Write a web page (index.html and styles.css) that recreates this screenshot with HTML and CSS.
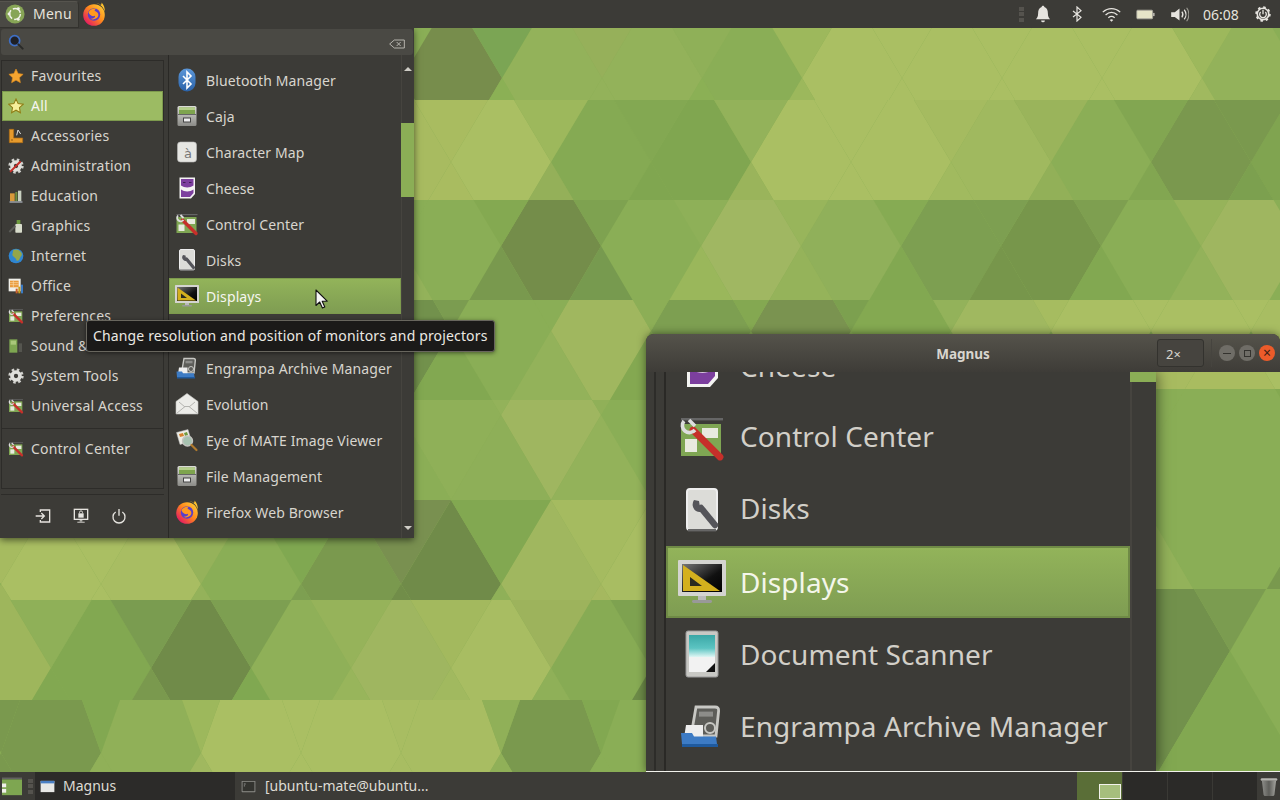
FILE: index.html
```html
<!DOCTYPE html>
<html lang="en">
<head>
<meta charset="utf-8">
<title>Ubuntu MATE desktop</title>
<link rel="stylesheet" href="styles.css">
</head>
<body>
<svg class="sprite" aria-hidden="true">
  <defs>
    <linearGradient id="gBt" x1="0" y1="0" x2="0" y2="1"><stop offset="0" stop-color="#5c97d8"/><stop offset="1" stop-color="#2a62a8"/></linearGradient>
    <linearGradient id="gGrey" x1="0" y1="0" x2="0" y2="1"><stop offset="0" stop-color="#dcdcd8"/><stop offset="1" stop-color="#8b8b87"/></linearGradient>
    <linearGradient id="gScreen" x1="0" y1="0" x2="1" y2="1"><stop offset="0" stop-color="#777"/><stop offset=".6" stop-color="#111"/><stop offset="1" stop-color="#000"/></linearGradient>
    <linearGradient id="gTeal" x1="0" y1="0" x2="0" y2="1"><stop offset="0" stop-color="#3aa7a6"/><stop offset=".6" stop-color="#5cc4c2"/><stop offset="1" stop-color="#dff6f4"/></linearGradient>
    <linearGradient id="gFx" x1="1" y1="0" x2="0" y2="1"><stop offset="0" stop-color="#ffd93a"/><stop offset=".45" stop-color="#ff8a1c"/><stop offset=".85" stop-color="#e6205e"/><stop offset="1" stop-color="#c4127a"/></linearGradient>
    <linearGradient id="gTrash" x1="0" y1="0" x2="1" y2="0"><stop offset="0" stop-color="#8d8d89"/><stop offset=".5" stop-color="#5e5e5a"/><stop offset="1" stop-color="#a5a5a0"/></linearGradient>

    <symbol id="i-bt" viewBox="0 0 24 24"><rect x="3.500" y=".5" width="17" height="23" rx="8.500" fill="url(#gBt)"/><path d="M8 8l8 8-4 4V4l4 4-8 8" fill="none" stroke="#fff" stroke-width="1.600"/></symbol>
    <symbol id="i-drawer" viewBox="0 0 24 24"><rect x="2.500" y="2" width="19" height="20" rx="1.500" fill="url(#gGrey)"/><rect x="4" y="3.500" width="16" height="6.500" fill="#7ea44e"/><rect x="4" y="3.500" width="16" height="2.500" fill="#b5cf8a"/><rect x="3" y="10" width="18" height="1" fill="#666"/><rect x="8.500" y="14" width="7" height="4" fill="#eee" stroke="#444"/></symbol>
    <symbol id="i-char" viewBox="0 0 24 24"><rect x="2.500" y="2" width="19" height="20" rx="3" fill="#e6e6e2" stroke="#bbb" stroke-width=".6"/><text class="glyph" x="13" y="18" text-anchor="middle">à</text></symbol>
    <symbol id="i-cheese" viewBox="0 0 24 24"><path d="M4.500 1.500H20V18l-4 4.500H4.500z" fill="#f4f4f2"/><path d="M6 3h12.500v6.500c-3.500 2.500-9 2.500-12.500 0z" fill="#7c3f9e"/><path d="M6 13.500c3.500 2.500 9 2.500 12.500 0v3.500l-3.500 4H6z" fill="#7c3f9e"/><path d="M8 6.500h2.500M14 6.500h2.500" stroke="#3e1f55"/></symbol>
    <symbol id="i-cc" viewBox="0 0 24 24"><rect x="1.500" y="2" width="21" height="1.200" fill="#666"/><rect x="1.500" y="5" width="20" height="16" fill="#7fa653"/><rect x="12" y="7" width="8" height="5" fill="#e8eadf"/><rect x="3.500" y="12.500" width="6" height="6.500" fill="#e8eadf"/><path d="M7.500 8l13.500 13.500" stroke="#c62f2a" stroke-width="3.400" stroke-linecap="round"/><path d="M3 3.500a3.500 3.500 0 0 0 5.500 4.500M5.500 3l3 3" fill="none" stroke="#ddd" stroke-width="1.800"/></symbol>
    <symbol id="i-disks" viewBox="0 0 24 24"><rect x="4.500" y="1.500" width="15" height="20.500" rx="1.500" fill="#dcdcd8" stroke="#eee"/><rect x="5" y="21.500" width="14" height="1.200" fill="#666"/><path d="M11.500 11l7 8.500" stroke="#55555a" stroke-width="3.200" stroke-linecap="round"/><path d="M8 7a4 4 0 0 0 1 5.500 4 4 0 0 0 5-1l-3-1-.5-3z" fill="#55555a"/></symbol>
    <symbol id="i-displays" viewBox="0 0 24 24"><rect x="0" y="1" width="24" height="18" rx=".5" fill="#d4d4d0"/><rect x="2" y="3" width="20" height="14" fill="url(#gScreen)"/><path d="M2.500 3.500V16.500H21z" fill="#d4b01e"/><path d="M6 9.500V14h6z" fill="#2a2a20"/><rect x="10" y="19" width="4" height="2" fill="#bbb"/><rect x="7" y="21" width="10" height="1.500" rx=".7" fill="#999"/></symbol>
    <symbol id="i-scanner" viewBox="0 0 24 24"><rect x="4" y=".5" width="16" height="23" rx="1" fill="#c8c8c4" stroke="#999" stroke-width=".5"/><rect x="5.500" y="2.500" width="13" height="11" fill="url(#gTeal)"/><rect x="5.500" y="13.500" width="13" height="7.500" fill="#f2f2f2"/><path d="M18.500 16.500V21H14z" fill="#111"/></symbol>
    <symbol id="i-engrampa" viewBox="0 0 24 24"><path d="M9 2.500h9.500q2 0 1.800 2L19 17H6.500z" fill="#5d5d59" stroke="#c8c8c4" stroke-width="1.400"/><rect x="10.500" y="4.800" width="7" height="2.500" fill="#8d8d8a"/><circle cx="16" cy="13" r="2.500" fill="none" stroke="#c8c8c4"/><path d="M4 11.500h8.500V18H3z" fill="#eee"/><path d="M1.500 15.500H7l1 1.800h11l.5 3.700H2z" fill="#3d7bc4"/><rect x="2" y="21" width="18" height="1.500" fill="#1f5a9e"/></symbol>
    <symbol id="i-evo" viewBox="0 0 24 24"><path d="M1 9.500L12 1.500l11 8V22H1z" fill="#ecece8" stroke="#c4c4c0" stroke-width=".6"/><path d="M1.500 21.500l8.500-7h4l8.500 7M4 10l6 5M20 10l-6 5" stroke="#b4b4b0" fill="none"/></symbol>
    <symbol id="i-eom" viewBox="0 0 24 24"><path d="M1.500 4.500L13 1.500l3.500 12L5 16.500z" fill="#ecece4" stroke="#bbb" stroke-width=".5"/><path d="M4 6l4-1 1 3-4 1z" fill="#d6812c"/><path d="M9 5l3-1 1 3-3 1z" fill="#6f9a3d"/><circle cx="12.500" cy="13" r="5" fill="#a7c2b0" stroke="#c4c4c0" stroke-width="1.400"/><path d="M16.500 17l5 5" stroke="#b07a2d" stroke-width="2.200" stroke-linecap="round"/></symbol>
    <symbol id="i-fx" viewBox="0 0 24 24"><circle cx="12" cy="13" r="10.800" fill="url(#gFx)"/><circle cx="12" cy="12.500" r="6.200" fill="#5a3ec8"/><path d="M6.500 10.500c1-3 4.500-4.500 8-4-2.300 .7-2.300 2.200-1 2.800 2.500 1 3.500 3 2.500 5.300-1.200 2.500-5 3.600-7.500 2.200 3.200 .2 5-1.300 4.500-3-1.800 1-4.800 .3-6.500-3.300z" fill="#ff9a1f"/><path d="M14.500 1c3.500 1 7 4 8.200 8.500.5-3.500-1-7-3.200-9 .2 1.300 0 2-.7 2.500-1-1-2.600-1.700-4.300-2z" fill="#ffc22e"/></symbol>

    <symbol id="i-star" viewBox="0 0 24 24"><path d="M12 1.500l3.200 6.900 7.500 1-5.500 5.200 1.400 7.400L12 18.300 5.400 22l1.400-7.400L1.300 9.400l7.500-1z" fill="#f5a430" stroke="#d5881f"/></symbol>
    <symbol id="i-star2" viewBox="0 0 24 24"><path d="M12 1.500l3.200 6.900 7.500 1-5.500 5.200 1.400 7.400L12 18.300 5.400 22l1.400-7.400L1.300 9.400l7.500-1z" fill="#f6ef9a" stroke="#8f7c14" stroke-width="1.600"/></symbol>
    <symbol id="i-acc" viewBox="0 0 24 24"><path d="M2 2h6.500v13H22v7H2z" fill="#e69a2c" stroke="#b06e14"/><path d="M15 3l-2 8M15 3l4 6" stroke="#ddd" stroke-width="1.500" fill="none"/><rect x="5" y="17" width="2" height="2" fill="#8a5410"/></symbol>
    <symbol id="i-gear" viewBox="0 0 24 24"><circle cx="12" cy="12" r="9.500" fill="none" stroke="#d2d2ce" stroke-width="4" stroke-dasharray="3.700 3.760"/><circle cx="12" cy="12" r="6" fill="none" stroke="#e0e0dc" stroke-width="5.500"/></symbol>
    <symbol id="i-admin" viewBox="0 0 24 24"><use href="#i-gear"/><path d="M4 20L18 6" stroke="#c62f2a" stroke-width="3" stroke-linecap="round"/></symbol>
    <symbol id="i-edu" viewBox="0 0 24 24"><rect x="3" y="8" width="7" height="12" fill="#d89a3a"/><rect x="11" y="6" width="3" height="14" fill="#6d8f3d"/><rect x="15" y="4" width="5" height="16" fill="#c8d0c0"/><rect x="2" y="20" width="20" height="2" rx="1" fill="#9aa0a8"/></symbol>
    <symbol id="i-gfx" viewBox="0 0 24 24"><rect x="11" y="9" width="10" height="13" rx="1" fill="#d8dccb"/><rect x="13" y="3" width="5.500" height="6" fill="#6d9a3d"/><path d="M2 21L11 12" stroke="#5c5c58" stroke-width="2.800"/></symbol>
    <symbol id="i-net" viewBox="0 0 24 24"><circle cx="12" cy="12" r="11" fill="#2f86d2"/><path d="M8 3c5-2 10 0 12.500 5 1 3-1 4-2.500 7-1 2.500-2.500 5-5 4-.7-3-2-4-4-5.500-2.500-1.500-3-3.500-2-5.500 .5-2 .5-3.500 1-5z" fill="#94a64a"/></symbol>
    <symbol id="i-office" viewBox="0 0 24 24"><rect x="1" y="1" width="18" height="19" fill="#f0f0ea"/><rect x="3" y="4" width="13" height="10" fill="#ea9a3a"/><path d="M3 7h13M3 10h13M8 4v10" stroke="#f8d9a8"/><rect x="11.500" y="16" width="3" height="7" fill="#c9602a"/><rect x="15.500" y="13" width="3" height="10" fill="#c9a020"/><rect x="19.500" y="10" width="3" height="13" fill="#3a7ac4"/></symbol>
    <symbol id="i-sound" viewBox="0 0 24 24"><rect x="2" y="2" width="12" height="20" fill="#7ea651"/><rect x="4" y="4" width="8" height="6" fill="#a9c77a"/><path d="M16 8h5v13h-5z" fill="#55554f"/></symbol>

    <symbol id="i-logo" viewBox="0 0 24 24"><circle cx="12" cy="12" r="11.500" fill="#87a556"/><circle cx="12" cy="12" r="6.500" fill="none" stroke="#f2f2ea" stroke-width="1.800" stroke-dasharray="11 2.600"/><circle cx="4.800" cy="12" r="1.700" fill="#f2f2ea"/><circle cx="16" cy="5.500" r="1.700" fill="#f2f2ea"/><circle cx="16" cy="18.500" r="1.700" fill="#f2f2ea"/></symbol>
    <symbol id="i-bell" viewBox="0 0 24 24"><path d="M12 1c-1.200 0-1.800 .8-1.800 1.800C6.500 4 5.500 7.500 5.500 11c0 4.500-1.300 6.500-3 8h19c-1.700-1.500-3-3.500-3-8 0-3.500-1-7-4.700-8.200C13.800 1.800 13.200 1 12 1zM9.500 20.500a2.500 2.500 0 0 0 5 0z" fill="#e6e4df"/></symbol>
    <symbol id="i-btg" viewBox="0 0 24 24"><path d="M6 7.500l12 9.500-6 5.500V1.500l6 5.500-12 9.500" fill="none" stroke="#e6e4df" stroke-width="1.800"/></symbol>
    <symbol id="i-wifi" viewBox="0 0 24 24"><path d="M1 9c6.500-6 15.500-6 22 0M4.500 12.500c4.500-4 10.500-4 15 0M8 16c2.500-2 5.500-2 8 0" fill="none" stroke="#e6e4df" stroke-width="1.700"/><path d="M9.800 18.800c1.300-1 3-1 4.400 0L12 21z" fill="#e6e4df"/></symbol>
    <symbol id="i-batt" viewBox="0 0 24 24"><rect x="1" y="6.500" width="20" height="11" rx="1.200" fill="#e6e4c8" stroke="#a8a69e"/><rect x="21.500" y="10" width="2" height="4" fill="#b8b6ae"/></symbol>
    <symbol id="i-vol" viewBox="0 0 24 24"><path d="M1.500 9H6l6-4.500v15L6 15H1.500z" fill="#e6e4df"/><path d="M15 8.500c1.500 2 1.500 5 0 7M18 6c2.800 3.500 2.800 8.500 0 12" fill="none" stroke="#e6e4df" stroke-width="1.600"/><path d="M21 3.500c3.800 5 3.800 12 0 17" fill="none" stroke="#9a9890" stroke-width="1.400"/></symbol>
    <symbol id="i-sys" viewBox="0 0 24 24"><circle cx="12" cy="12" r="8.600" fill="none" stroke="#e6e4df" stroke-width="2.400"/><circle cx="12" cy="12" r="10.300" fill="none" stroke="#e6e4df" stroke-width="2.600" stroke-dasharray="3.800 4.290"/><path d="M8.500 9a5 5 0 1 0 7 0M12 5.500v7" fill="none" stroke="#e6e4df" stroke-width="2"/></symbol>

    <symbol id="i-logout" viewBox="0 0 24 24"><path d="M8 6V3h14v18H8v-3" fill="none" stroke="#e6e4df" stroke-width="2"/><path d="M1 12h12M9.500 7.500L14 12l-4.500 4.500" fill="none" stroke="#e6e4df" stroke-width="2"/></symbol>
    <symbol id="i-lock" viewBox="0 0 24 24"><rect x="1" y="1" width="22" height="17" fill="#e6e4df"/><rect x="3" y="3" width="18" height="13" fill="#3c3b37"/><rect x="8" y="8" width="8" height="6.500" fill="#e6e4df"/><path d="M9.800 8V6.500a2.200 2.200 0 0 1 4.400 0V8" fill="none" stroke="#e6e4df" stroke-width="1.400"/><rect x="10" y="18" width="4" height="2.500" fill="#b5b3ae"/><rect x="6.500" y="20.500" width="11" height="1.800" fill="#b5b3ae"/></symbol>
    <symbol id="i-power" viewBox="0 0 24 24"><path d="M7 6a9 9 0 1 0 10 0" fill="none" stroke="#e6e4df" stroke-width="2"/><path d="M12 1.500v10" stroke="#e6e4df" stroke-width="2"/></symbol>
    <symbol id="i-search" viewBox="0 0 24 24"><circle cx="10" cy="10" r="7.500" fill="#1f2026" stroke="#3f6fc4" stroke-width="2.600"/><path d="M15.500 15.500l6.500 6.500" stroke="#2a2a28" stroke-width="3" stroke-linecap="round"/></symbol>
    <symbol id="i-clear" viewBox="0 0 24 24"><path d="M8 6h15v12H8l-7-6z" fill="none" stroke="#bdbbb5" stroke-width="1.400"/><path d="M11.500 9l6 6M17.500 9l-6 6" stroke="#bdbbb5" stroke-width="1.400"/></symbol>
    <symbol id="i-win" viewBox="0 0 24 24"><rect x="1" y="3" width="22" height="18" fill="#e8e8e6"/><rect x="1" y="3" width="22" height="4" fill="#4a7fc4"/></symbol>
    <symbol id="i-term" viewBox="0 0 24 24"><rect x="1" y="3" width="22" height="18" rx="1" fill="#8a8a86"/><rect x="2.500" y="4.500" width="19" height="15" fill="#33332f"/><path d="M4.500 8h3M4.500 11h2" stroke="#ccc"/></symbol>
    <symbol id="i-desk" viewBox="0 0 24 24"><rect x="0" y="2" width="24" height="1.200" fill="#777"/><rect x="0" y="4" width="24" height="19" fill="#7ea651"/><rect x="0" y="9" width="5" height="4.500" fill="#f0f0ea"/><rect x="0" y="15.500" width="5" height="4.500" fill="#f0f0ea"/></symbol>
    <symbol id="i-trash" viewBox="0 0 24 24"><rect x="2" y="2" width="20" height="3" rx="1.500" fill="#b5b5b0"/><path d="M3.500 5h17l-2 17a2 2 0 0 1-2 1.500h-9A2 2 0 0 1 5.500 22z" fill="url(#gTrash)"/></symbol>
    <symbol id="i-cursor" viewBox="0 0 13 20"><path d="M1 1v15.500l3.700-3.500 2.700 6 2.400-1-2.600-5.800h5z" fill="#f6f6f6" stroke="#111" stroke-width="1.100" stroke-linejoin="round"/></symbol>

    <polygon id="h0" points="0,78 46.300,0 53.700,0 100,78 87,100 13,100"/><polygon id="t0" points="0,78 -46.300,0 46.300,0"/><polygon id="b0" points="0,78 -13,100 13,100"/>
    <polygon id="h1" points="0,162 37,100 63,100 100,162 77.500,200 22.500,200"/><polygon id="t1" points="0,162 -37,100 37,100"/><polygon id="b1" points="0,162 -22.500,200 22.500,200"/>
    <polygon id="h2" points="0,246 27.500,200 72.500,200 100,246 68.400,300 31.600,300"/><polygon id="t2" points="0,246 -27.500,200 27.500,200"/><polygon id="b2" points="0,246 -31.600,300 31.600,300"/>
    <polygon id="h3" points="0,331 18,300 82,300 100,331 59,400 41,400"/><polygon id="t3" points="0,331 -18,300 18,300"/><polygon id="b3" points="0,331 -41,400 41,400"/>
    <polygon id="h4" points="0,415 9,400 91,400 100,415 50,500"/><polygon id="t4" points="0,415 -9,400 9,400"/><polygon id="b4" points="0,415 -50,500 50,500"/>
    <polygon id="h5" points="0,584 50,500 100,584 90,600 10,600"/><polygon id="t5" points="0,584 -50,500 50,500"/><polygon id="b5" points="0,584 -10,600 10,600"/>
    <polygon id="h6" points="0,668 40.500,600 59.500,600 100,668 81,700 19,700"/><polygon id="t6" points="0,668 -40.500,600 40.500,600"/><polygon id="b6" points="0,668 -19,700 19,700"/>
    <polygon id="h7" points="0,753 19,700 81,700 100,753 72,800 28,800"/><polygon id="t7" points="0,753 -19,700 19,700"/><polygon id="b7" points="0,753 -28,800 28,800"/>

    <g id="wall">
      <rect width="1280" height="800" fill="#8aae56"/>
      <use href="#h0" x="402" fill="#778d4c"/><use href="#h0" x="502" fill="#93b25a"/><use href="#h0" x="602" fill="#93b25a"/><use href="#h0" x="702" fill="#8aae56"/><use href="#h0" x="802" fill="#aabf63"/><use href="#h0" x="902" fill="#aabf63"/><use href="#h0" x="1002" fill="#aabf63"/><use href="#h0" x="1102" fill="#aabf63"/><use href="#h0" x="1202" fill="#93b25a"/>
      <use href="#t0" x="502" fill="#7ba554"/><use href="#t0" x="602" fill="#96b05a"/><use href="#t0" x="702" fill="#8fb058"/><use href="#t0" x="802" fill="#9db85c"/><use href="#t0" x="902" fill="#aabf63"/><use href="#t0" x="1002" fill="#aabf63"/><use href="#t0" x="1102" fill="#aabf63"/><use href="#t0" x="1202" fill="#9db85c"/>
      <use href="#b0" x="502" fill="#8bb055"/><use href="#b0" x="602" fill="#93b25a"/><use href="#b0" x="702" fill="#8bb055"/><use href="#b0" x="802" fill="#9cb85c"/><use href="#b0" x="902" fill="#aabf63"/><use href="#b0" x="1002" fill="#aabf63"/><use href="#b0" x="1102" fill="#aabf63"/><use href="#b0" x="1202" fill="#a0b95f"/>

      <use href="#h1" x="351" fill="#a8bb60"/><use href="#h1" x="451" fill="#aabf63"/><use href="#h1" x="551" fill="#85aa53"/><use href="#h1" x="651" fill="#80a650"/><use href="#h1" x="751" fill="#aabf63"/><use href="#h1" x="851" fill="#aabf63"/><use href="#h1" x="951" fill="#a0b95f"/><use href="#h1" x="1051" fill="#8bae56"/><use href="#h1" x="1151" fill="#7a984e"/><use href="#h1" x="1251" fill="#80a450"/>
      <use href="#t1" x="451" fill="#a9bc60"/><use href="#t1" x="551" fill="#9db85c"/><use href="#t1" x="651" fill="#83a852"/><use href="#t1" x="751" fill="#93b25a"/><use href="#t1" x="851" fill="#aabf63"/><use href="#t1" x="951" fill="#a5bb60"/><use href="#t1" x="1051" fill="#9ab45b"/><use href="#t1" x="1151" fill="#82a651"/><use href="#t1" x="1251" fill="#7a994e"/>
      <use href="#b1" x="451" fill="#a9bc60"/><use href="#b1" x="551" fill="#94b059"/><use href="#b1" x="651" fill="#80a650"/><use href="#b1" x="751" fill="#9ab45b"/><use href="#b1" x="851" fill="#aabf63"/><use href="#b1" x="951" fill="#a1ba5f"/><use href="#b1" x="1051" fill="#92b058"/><use href="#b1" x="1151" fill="#82a651"/><use href="#b1" x="1251" fill="#7ca04f"/>

      <use href="#h2" x="401" fill="#8aae56"/><use href="#h2" x="501" fill="#748d4a"/><use href="#h2" x="601" fill="#8aae56"/><use href="#h2" x="701" fill="#a0b762"/><use href="#h2" x="801" fill="#90b05a"/><use href="#h2" x="901" fill="#7d9f51"/><use href="#h2" x="1001" fill="#77964b"/><use href="#h2" x="1101" fill="#8aae56"/><use href="#h2" x="1201" fill="#9fb660"/>
      <use href="#t2" x="401" fill="#8aae56"/><use href="#t2" x="501" fill="#84a951"/><use href="#t2" x="601" fill="#7ea250"/><use href="#t2" x="701" fill="#8eb058"/><use href="#t2" x="801" fill="#98b55b"/><use href="#t2" x="901" fill="#86ab53"/><use href="#t2" x="1001" fill="#7d9f51"/><use href="#t2" x="1101" fill="#7e9f50"/><use href="#t2" x="1201" fill="#96b35a"/>
      <use href="#b2" x="401" fill="#93b25a"/><use href="#b2" x="501" fill="#79994e"/><use href="#b2" x="601" fill="#779a4f"/><use href="#b2" x="701" fill="#9ab75b"/><use href="#b2" x="801" fill="#95b35a"/><use href="#b2" x="901" fill="#82a851"/><use href="#b2" x="1001" fill="#77964b"/><use href="#b2" x="1101" fill="#82a851"/><use href="#b2" x="1201" fill="#93b25a"/>

      <use href="#h3" x="351" fill="#72914c"/><use href="#h3" x="451" fill="#8aae56"/><use href="#h3" x="551" fill="#a0b75f"/><use href="#h3" x="651" fill="#7d9f51"/><use href="#h3" x="751" fill="#7a9350"/><use href="#h3" x="851" fill="#84a951"/><use href="#h3" x="951" fill="#a0b860"/><use href="#h3" x="1051" fill="#aabf63"/><use href="#h3" x="1151" fill="#aabf63"/><use href="#h3" x="1251" fill="#a8bd62"/>
      <use href="#t3" x="451" fill="#7b9c50"/><use href="#t3" x="551" fill="#8aae56"/><use href="#t3" x="651" fill="#8cae56"/><use href="#t3" x="751" fill="#84a851"/><use href="#t3" x="851" fill="#7ca04f"/><use href="#t3" x="951" fill="#93b25a"/><use href="#t3" x="1051" fill="#a6bc60"/><use href="#t3" x="1151" fill="#aabf63"/><use href="#t3" x="1251" fill="#aabf63"/>
      <use href="#b3" x="451" fill="#82a851"/><use href="#b3" x="551" fill="#93b25a"/><use href="#b3" x="651" fill="#84a851"/>

      <use href="#h4" x="401" fill="#8fb058"/><use href="#h4" x="501" fill="#9fb660"/><use href="#h4" x="601" fill="#8aae56"/>
      <use href="#t4" x="401" fill="#82a851"/><use href="#t4" x="501" fill="#93b25a"/><use href="#t4" x="601" fill="#90b058"/>
      <use href="#b4" x="401" fill="#8bae56"/><use href="#b4" x="501" fill="#8eaf58"/><use href="#b4" x="601" fill="#93b25a"/>

      <use href="#h5" x="1" fill="#aabf63"/><use href="#h5" x="101" fill="#a8bd62"/><use href="#h5" x="201" fill="#8aae56"/><use href="#h5" x="301" fill="#7a994e"/><use href="#h5" x="401" fill="#708b49"/><use href="#h5" x="501" fill="#a0b75f"/><use href="#h5" x="601" fill="#a8bd62"/>
      <use href="#t5" x="1" fill="#a6bb60"/><use href="#t5" x="101" fill="#aabf63"/><use href="#t5" x="201" fill="#95b25a"/><use href="#t5" x="301" fill="#80a851"/><use href="#t5" x="401" fill="#799050"/><use href="#t5" x="501" fill="#82a851"/><use href="#t5" x="601" fill="#a5bb60"/>
      <use href="#b5" x="1" fill="#9eb65c"/><use href="#b5" x="101" fill="#aabf63"/><use href="#b5" x="201" fill="#94b25a"/><use href="#b5" x="301" fill="#7d9f51"/><use href="#b5" x="401" fill="#718d49"/><use href="#b5" x="501" fill="#8fb058"/><use href="#b5" x="601" fill="#a5b85f"/>

      <use href="#h6" x="-49" fill="#9eb65c"/><use href="#h6" x="51" fill="#82a851"/><use href="#h6" x="151" fill="#708b49"/><use href="#h6" x="251" fill="#8fb058"/><use href="#h6" x="351" fill="#9fb660"/><use href="#h6" x="451" fill="#a8bd62"/><use href="#h6" x="551" fill="#87ab54"/>
      <use href="#t6" x="51" fill="#8fb058"/><use href="#t6" x="151" fill="#7a9c50"/><use href="#t6" x="251" fill="#7d9f51"/><use href="#t6" x="351" fill="#96b35a"/><use href="#t6" x="451" fill="#a3b95e"/><use href="#t6" x="551" fill="#9db35c"/><use href="#t6" x="651" fill="#7ea250"/>
      <use href="#b6" x="51" fill="#82a851"/><use href="#b6" x="151" fill="#7a994e"/><use href="#b6" x="251" fill="#80a851"/><use href="#b6" x="351" fill="#98b55b"/><use href="#b6" x="451" fill="#a1b95f"/><use href="#b6" x="551" fill="#8fb058"/><use href="#b6" x="651" fill="#6c8a47"/>

      <use href="#h7" x="1" fill="#7a994e"/><use href="#h7" x="101" fill="#90b058"/><use href="#h7" x="201" fill="#aabf63"/><use href="#h7" x="301" fill="#aabf63"/><use href="#h7" x="401" fill="#a8bd62"/><use href="#h7" x="501" fill="#7a994e"/><use href="#h7" x="601" fill="#8aae56"/>
      <use href="#t7" x="1" fill="#7a994e"/><use href="#t7" x="101" fill="#82a851"/><use href="#t7" x="201" fill="#9db85c"/><use href="#t7" x="301" fill="#aabf63"/><use href="#t7" x="401" fill="#a8bd62"/><use href="#t7" x="501" fill="#90b058"/><use href="#t7" x="601" fill="#82a851"/>
      <use href="#b7" x="1" fill="#7a994e"/><use href="#b7" x="101" fill="#90b058"/><use href="#b7" x="201" fill="#a0b85f"/><use href="#b7" x="301" fill="#aabf63"/><use href="#b7" x="401" fill="#a8bd62"/><use href="#b7" x="501" fill="#90b058"/><use href="#b7" x="601" fill="#8aae56"/>
    </g>
  </defs>
</svg>

<div class="desktop">
  <svg class="wallpaper" width="1280" height="800" aria-hidden="true"><use href="#wall"/></svg>

  <header class="top-panel">
    <div class="panel-left">
      <button class="menu-btn"><svg class="ic-logo"><use href="#i-logo"/></svg><span>Menu</span></button>
      <svg class="ic-launcher"><use href="#i-fx"/></svg>
    </div>
    <div class="tray">
      <div class="handle tray-handle"><i></i><i></i><i></i></div>
      <div class="tray-cell"><svg class="ic-bell"><use href="#i-bell"/></svg></div>
      <div class="tray-cell"><svg class="ic-btg"><use href="#i-btg"/></svg></div>
      <div class="tray-cell"><svg class="ic-tray"><use href="#i-wifi"/></svg></div>
      <div class="tray-cell"><svg class="ic-tray"><use href="#i-batt"/></svg></div>
      <div class="tray-cell"><svg class="ic-tray"><use href="#i-vol"/></svg></div>
      <div class="clock">06:08</div>
      <div class="tray-cell"><svg class="ic-sys"><use href="#i-sys"/></svg></div>
    </div>
  </header>

  <footer class="bottom-panel">
    <svg class="ic-desk"><use href="#i-desk"/></svg>
    <div class="handle bottom-handle"><i></i><i></i><i></i></div>
    <div class="task task-active"><svg class="ic-task"><use href="#i-win"/></svg><span>Magnus</span></div>
    <div class="task"><svg class="ic-task"><use href="#i-term"/></svg><span>[ubuntu-mate@ubuntu...</span></div>
    <div class="spacer"></div>
    <div class="workspaces">
      <div class="ws ws-active"><span class="ws-win"></span></div>
      <div class="ws"></div><div class="ws"></div><div class="ws"></div>
    </div>
    <svg class="ic-trash"><use href="#i-trash"/></svg>
  </footer>

  <section class="menu">
    <div class="search">
      <svg class="ic-search"><use href="#i-search"/></svg>
      <svg class="ic-clear"><use href="#i-clear"/></svg>
    </div>
    <div class="menu-body">
      <aside class="side">
        <nav class="cats">
          <div class="cat"><svg class="ic-cat"><use href="#i-star"/></svg><span>Favourites</span></div>
          <div class="cat cat-on"><svg class="ic-cat"><use href="#i-star2"/></svg><span>All</span></div>
          <div class="cat"><svg class="ic-cat"><use href="#i-acc"/></svg><span>Accessories</span></div>
          <div class="cat"><svg class="ic-cat"><use href="#i-admin"/></svg><span>Administration</span></div>
          <div class="cat"><svg class="ic-cat"><use href="#i-edu"/></svg><span>Education</span></div>
          <div class="cat"><svg class="ic-cat"><use href="#i-gfx"/></svg><span>Graphics</span></div>
          <div class="cat"><svg class="ic-cat"><use href="#i-net"/></svg><span>Internet</span></div>
          <div class="cat"><svg class="ic-cat"><use href="#i-office"/></svg><span>Office</span></div>
          <div class="cat"><svg class="ic-cat"><use href="#i-cc"/></svg><span>Preferences</span></div>
          <div class="cat"><svg class="ic-cat"><use href="#i-sound"/></svg><span>Sound &amp; Video</span></div>
          <div class="cat"><svg class="ic-cat"><use href="#i-gear"/></svg><span>System Tools</span></div>
          <div class="cat"><svg class="ic-cat"><use href="#i-cc"/></svg><span>Universal Access</span></div>
          <div class="cat-sep"></div>
          <div class="cat"><svg class="ic-cat"><use href="#i-cc"/></svg><span>Control Center</span></div>
        </nav>
        <div class="session">
          <svg class="ic-session"><use href="#i-logout"/></svg>
          <svg class="ic-session"><use href="#i-lock"/></svg>
          <svg class="ic-session"><use href="#i-power"/></svg>
        </div>
      </aside>
      <div class="apps">
        <div class="app"><svg class="ic-app"><use href="#i-bt"/></svg><span>Bluetooth Manager</span></div>
        <div class="app"><svg class="ic-app"><use href="#i-drawer"/></svg><span>Caja</span></div>
        <div class="app"><svg class="ic-app"><use href="#i-char"/></svg><span>Character Map</span></div>
        <div class="app"><svg class="ic-app"><use href="#i-cheese"/></svg><span>Cheese</span></div>
        <div class="app"><svg class="ic-app"><use href="#i-cc"/></svg><span>Control Center</span></div>
        <div class="app"><svg class="ic-app"><use href="#i-disks"/></svg><span>Disks</span></div>
        <div class="app app-on"><svg class="ic-app"><use href="#i-displays"/></svg><span>Displays</span></div>
        <div class="app"><svg class="ic-app"><use href="#i-scanner"/></svg><span>Document Scanner</span></div>
        <div class="app"><svg class="ic-app"><use href="#i-engrampa"/></svg><span>Engrampa Archive Manager</span></div>
        <div class="app"><svg class="ic-app"><use href="#i-evo"/></svg><span>Evolution</span></div>
        <div class="app"><svg class="ic-app"><use href="#i-eom"/></svg><span>Eye of MATE Image Viewer</span></div>
        <div class="app"><svg class="ic-app"><use href="#i-drawer"/></svg><span>File Management</span></div>
        <div class="app"><svg class="ic-app"><use href="#i-fx"/></svg><span>Firefox Web Browser</span></div>
      </div>
      <div class="scroll">
        <div class="scroll-btn"><b class="arrow-up"></b></div>
        <div class="scroll-track"><div class="scroll-thumb"></div></div>
        <div class="scroll-btn"><b class="arrow-down"></b></div>
      </div>
    </div>
  </section>

  <div class="tooltip">Change resolution and position of monitors and projectors</div>
  <svg class="cursor"><use href="#i-cursor"/></svg>

  <section class="magnus">
    <div class="titlebar">
      <div></div>
      <div class="title">Magnus</div>
      <div class="title-right">
        <div class="combo">2×</div>
        <div class="title-sep"></div>
        <div class="wbtn"><i class="wb-min"></i></div>
        <div class="wbtn"><i class="wb-max"></i></div>
        <div class="wbtn wbtn-close">×</div>
      </div>
    </div>
    <div class="mag">
      <svg class="mag-wall" width="634" height="399" aria-hidden="true"><use href="#wall" transform="scale(2) translate(-159 -191.5)"/></svg>
      <div class="mag-menu">
        <div class="mag-side"></div>
        <div class="mag-apps">
          <div class="mag-app"><svg class="ic-mag"><use href="#i-cheese"/></svg><span>Cheese</span></div>
          <div class="mag-app mag-up"><svg class="ic-mag"><use href="#i-cc"/></svg><span>Control Center</span></div>
          <div class="mag-app mag-up"><svg class="ic-mag"><use href="#i-disks"/></svg><span>Disks</span></div>
          <div class="mag-app mag-on"><svg class="ic-mag"><use href="#i-displays"/></svg><span>Displays</span></div>
          <div class="mag-app"><svg class="ic-mag"><use href="#i-scanner"/></svg><span>Document Scanner</span></div>
          <div class="mag-app"><svg class="ic-mag"><use href="#i-engrampa"/></svg><span>Engrampa Archive Manager</span></div>
        </div>
        <div class="mag-scroll"><div class="mag-thumb"></div></div>
      </div>
    </div>
  </section>
</div>
</body>
</html>
```

FILE: styles.css
```css
* { box-sizing: border-box; }
html, body { margin: 0; padding: 0; }
body { font-family: "Noto Sans", "Open Sans", sans-serif; font-size: 14px; color: #d8d5ce; }
svg { display: block; flex: none; }
.sprite { position: absolute; width: 0; height: 0; overflow: hidden; }
.glyph { font-family: "DejaVu Sans", sans-serif; font-size: 13px; fill: #777; }

.desktop { position: relative; width: 1280px; height: 800px; overflow: hidden; display: flex; flex-direction: column; justify-content: space-between; }
.wallpaper { position: absolute; left: 0; top: 0; }

/* top panel */
.top-panel { position: relative; height: 28px; background: #3c3b37; display: flex; justify-content: space-between; align-items: stretch; z-index: 3; }
.panel-left { display: flex; align-items: center; }
.menu-btn { height: 27px; width: 79px; margin: 0; padding: 0 0 0 5px; display: flex; align-items: center; gap: 8px; border: 1px solid #33322e; border-top-color: #56544e; border-left: 0; border-radius: 0 4px 0 0; background: #4a4944; color: #e6e3dc; font: 14px "Noto Sans", sans-serif; letter-spacing: .25px; }
.menu-btn span { margin-top: -2px; }
.ic-logo { width: 20px; height: 20px; }
.ic-launcher { width: 24px; height: 24px; margin-left: 3px; }
.tray { display: flex; align-items: center; height: 28px; }
.tray-cell { width: 34px; height: 28px; display: flex; align-items: center; justify-content: center; }
.handle { display: flex; flex-direction: column; gap: 1.500px; }
.handle i { display: block; width: 5px; height: 4px; background: #55534e; }
.tray-handle { margin-right: 2px; }
.clock { width: 50px; text-align: center; font-size: 14px; color: #e6e3dc; }
.ic-bell { width: 18px; height: 18px; }
.ic-btg { width: 16px; height: 16px; }
.ic-tray { width: 19px; height: 19px; }
.ic-sys { width: 16px; height: 16px; }

/* bottom panel */
.bottom-panel { position: relative; height: 28px; background: #3c3b37; display: flex; align-items: center; z-index: 3; }
.ic-desk { width: 20px; height: 20px; margin-left: 2px; }
.bottom-handle { margin: 0 2px 0 6px; }
.task { width: 200px; height: 28px; display: flex; align-items: center; padding-left: 5px; gap: 8px; color: #dedbd4; }
.task span { margin-top: -2px; }
.task-active { background: #2c2b29; margin-right: 1px; }
.task-active + .task { gap: 9px; }
.ic-task { width: 15px; height: 15px; }
.spacer { flex: 1; }
.workspaces { display: flex; height: 28px; }
.ws { width: 45px; background: #2b2a28; border-left: 1px solid #3a3935; position: relative; }
.ws-active { background: #5a6e37; border-left: 0; }
.ws-win { position: absolute; right: 1px; bottom: 1px; width: 22px; height: 15px; background: #a6be7d; border: 1px solid #f2f2ec; }
.ic-trash { width: 20px; height: 21px; margin: 0 1px 0 2px; }

/* menu */
.menu { position: absolute; left: 0; top: 28px; width: 414px; height: 510px; background: #3c3b37; display: flex; flex-direction: column; box-shadow: 0 2px 7px rgba(0,0,0,.55); z-index: 2; }
.search { margin: 1px 1px 0; height: 26px; background: #4a4944; border-radius: 3px; display: flex; align-items: center; justify-content: space-between; padding: 0 8px 0 7px; flex: none; }
.ic-search { width: 16px; height: 16px; }
.ic-clear { width: 16px; height: 16px; margin-top: 4px; }
.menu-body { flex: 1; display: flex; min-height: 0; }
.side { width: 168px; padding: 5px 4px 0 1px; display: flex; flex-direction: column; flex: none; }
.cats { height: 429px; border: 1px solid #2d2c29; flex: none; }
.cat { height: 30px; display: flex; align-items: center; gap: 7px; padding-left: 6px; letter-spacing: .2px; }
.cat span { margin-top: -2px; }
.cat-on { background: #9cbb63; border: 1px solid #7d9a4d; padding-left: 5px; color: #f6f6f0; }
.cat-sep { height: 1px; margin: 7px 0 5px; background: #2d2c29; }
.ic-cat { width: 16px; height: 16px; }
.session { margin-top: 5px; border-top: 1px solid #2d2c29; padding: 13px 0 0 34px; display: flex; gap: 22px; }
.ic-session { width: 16px; height: 16px; }
.apps { flex: 1; border-left: 1px solid #2a2926; padding-top: 7px; }
.app { height: 36px; display: flex; align-items: center; padding-left: 6px; gap: 7px; letter-spacing: .12px; }
.app-on { background: linear-gradient(#93b45a, #7e9c52); box-shadow: inset 0 0 0 1px #7d9a4d; color: #f6f6f0; }
.ic-app { width: 24px; height: 24px; }
.scroll { width: 13px; border-left: 1px solid #46443f; padding: 5px 0 2px; display: flex; flex-direction: column; flex: none; }
.scroll-btn { height: 17px; display: flex; align-items: center; justify-content: center; flex: none; }
.scroll-track { flex: 1; padding-top: 46px; }
.scroll-thumb { height: 74px; background: #8bae56; margin-left: -1px; }
.arrow-up { border: 4px solid transparent; border-top: 0; border-bottom: 4px solid #cfcdc6; }
.arrow-down { border: 4px solid transparent; border-bottom: 0; border-top: 4px solid #cfcdc6; }

/* tooltip + pointer */
.tooltip { position: absolute; left: 86px; top: 320px; width: 409px; height: 32px; line-height: 30px; padding-left: 6px; background: #1b1a19; border: 1px solid #68665e; border-radius: 3px; color: #ebe9e3; white-space: nowrap; letter-spacing: .15px; box-shadow: 0 1px 4px rgba(0,0,0,.5); z-index: 4; }
.cursor { position: absolute; left: 315px; top: 289px; width: 13px; height: 20px; z-index: 5; }

/* magnus */
.magnus { position: absolute; left: 646px; top: 334px; width: 634px; height: 438px; display: flex; flex-direction: column; border-radius: 8px 8px 0 0; overflow: hidden; box-shadow: 0 0 8px rgba(0,0,0,.5); background: #3c3b37; border-bottom: 1px solid #f2f2ec; z-index: 1; }
.titlebar { height: 38px; flex: none; display: grid; grid-template-columns: 1fr auto 1fr; align-items: center; background: linear-gradient(#55534b, #3e3c38); }
.title { font-weight: 700; font-size: 13.500px; padding-top: 2px; color: #d8d5ce; }
.title-right { display: flex; align-items: center; justify-content: flex-end; padding-right: 5px; gap: 4px; }
.combo { width: 47px; height: 28px; margin-right: 3px; padding-left: 8px; line-height: 28px; border: 1px solid #33322e; border-radius: 3px; font-size: 13px; background: #46443f; }
.title-sep { width: 1px; height: 28px; background: #46443f; margin-right: 3px; }
.wbtn { width: 16px; height: 16px; border-radius: 50%; background: #6f6d67; display: flex; align-items: center; justify-content: center; color: #3a2016; font-size: 14px; line-height: 16px; }
.wbtn-close { background: #ec5b2a; }
.wb-min { width: 8px; height: 1px; background: #33322e; }
.wb-max { width: 7px; height: 7px; border: 1px solid #33322e; }
.mag { position: relative; flex: 1; overflow: hidden; }
.mag-wall { position: absolute; left: 0; top: 0; }
.mag-menu { position: relative; width: 510px; height: 100%; background: #3c3b37; display: flex; box-shadow: 0 0 14px rgba(0,0,0,.6); }
.mag-side { width: 20px; flex: none; margin-left: 0; border-right: 2px solid #2a2926; position: relative; background: linear-gradient(90deg, transparent 8px, #2d2c29 8px, #2d2c29 10px, transparent 10px); }
.mag-apps { flex: 1; margin-top: -42px; min-width: 0; }
.mag-app { height: 72px; display: flex; align-items: center; padding-left: 12px; gap: 14px; font-size: 28px; letter-spacing: .08px; white-space: nowrap; color: #d2cfc8; }
.mag-up span { margin-top: -4px; }
.mag-on { background: linear-gradient(#93b45a, #7e9c52); box-shadow: inset 0 0 0 2px #6f8a46; color: #f4f6ea; }
.ic-mag { width: 48px; height: 48px; }
.mag-scroll { width: 26px; flex: none; border-left: 2px solid #46443f; }
.mag-thumb { height: 10px; margin-left: -2px; background: #8bae56; }
```
